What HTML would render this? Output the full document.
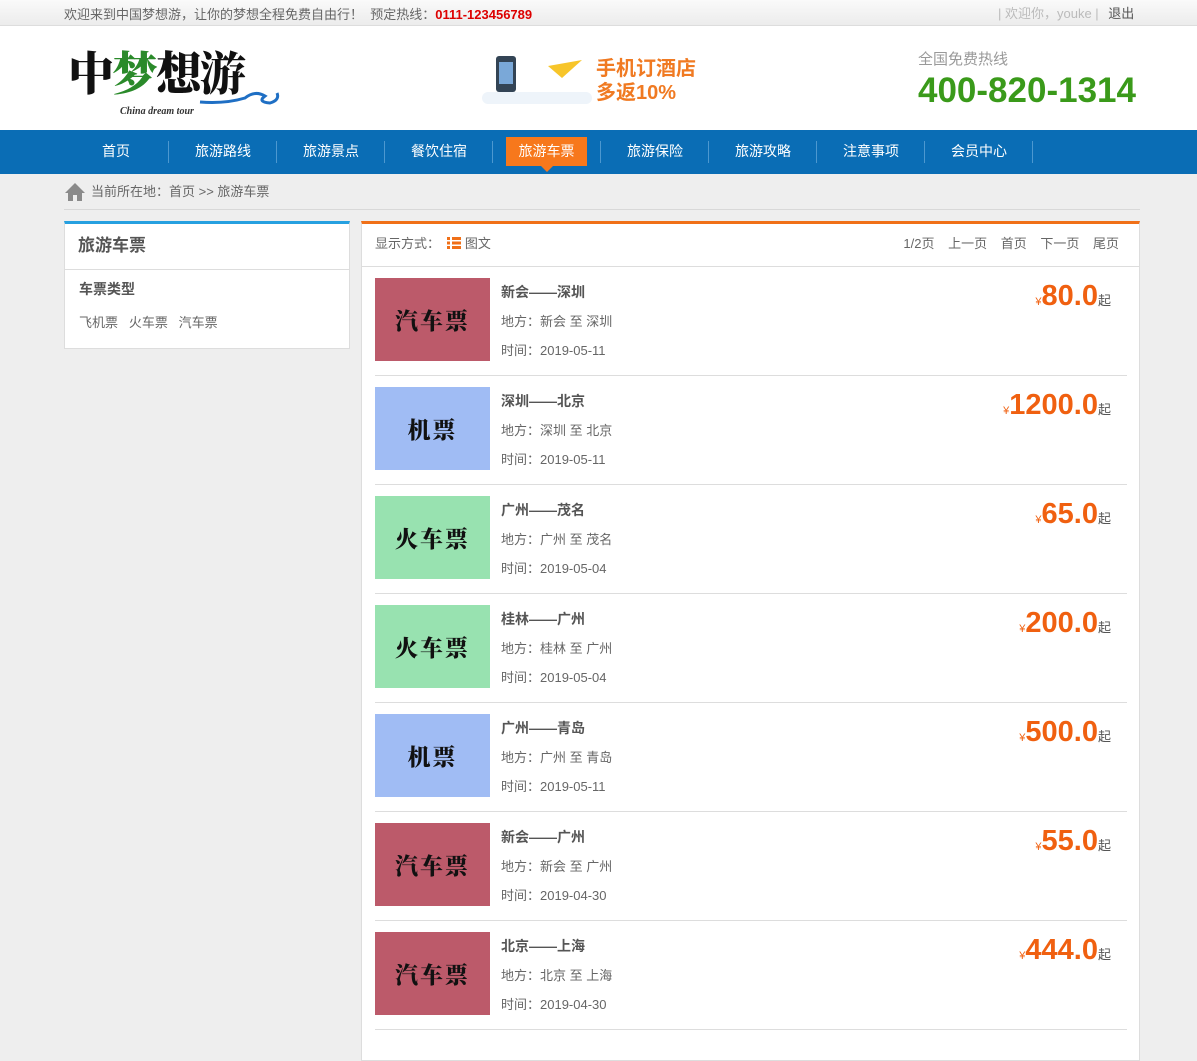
<!DOCTYPE html>
<html><head><meta charset="utf-8"><style>
*{margin:0;padding:0;box-sizing:border-box}
body{width:1197px;height:1051px;overflow:hidden;background:#eeeeee;font-family:"Liberation Sans","Noto Sans CJK SC",sans-serif;font-size:13px;color:#555}
.top{height:26px;background:linear-gradient(#fafafa,#ececec);border-bottom:1px solid #ddd;position:relative}
.top .l{position:absolute;left:64px;top:4px;font-size:13px;color:#666}
.top .l b{color:#d00;font-weight:bold}
.top .r{position:absolute;left:998px;top:3px;color:#bbb;font-size:13px}
.top .r span{color:#555;margin-left:6px}
.hd{height:104px;background:#fff;position:relative}
.nav{height:44px;background:#0a6db5;position:relative}
.nav a{position:absolute;top:0;width:108px;height:44px;line-height:42px;text-align:center;color:#fff;font-size:14px}
.nav i{position:absolute;top:11px;width:1px;height:22px;background:#4c98d0}
.nav .act{position:absolute;left:506px;top:7px;width:81px;height:29px;background:#f7781c;color:#fff;text-align:center;line-height:29px;font-size:14px}
.nav .act:after{content:"";position:absolute;left:35px;bottom:-6px;border:6px solid transparent;border-top-color:#f7781c;border-bottom:0}
.crumb{position:absolute;left:64px;top:176px;width:1076px;height:34px;border-bottom:1px solid #d8d8d8;line-height:32px;font-size:13px;color:#666;padding-left:27px}
.lbox{position:absolute;left:64px;top:221px;width:286px;height:128px;background:#fff;border:1px solid #ddd;border-top:3px solid #26a0e0}
.lbox h2{height:46px;line-height:44px;font-size:17px;color:#555;padding-left:13px;border-bottom:1px solid #ddd}
.lbox h3{font-size:14px;color:#555;padding:9px 0 0 14px;font-weight:bold}
.lbox p{padding:13px 0 0 14px;color:#666}
.rbox{position:absolute;left:361px;top:221px;width:779px;height:840px;background:#fff;border:1px solid #ddd;border-top:3px solid #f07018}
.rh{height:43px;border-bottom:1px solid #ddd;position:relative;line-height:40px;color:#666}
.rh .l{position:absolute;left:13px}
.rh .r{position:absolute;right:20px}
.rh .r span{margin-left:10px}
.row{position:absolute;left:13px;width:752px;height:109px;border-bottom:1px solid #ddd}
.img{position:absolute;left:0;top:11px;width:115px;height:83px;font-family:"Noto Serif CJK SC",serif;font-weight:900;font-size:23px;color:#111;text-align:center;line-height:83px;letter-spacing:2px}
.bus{background:#bc5a6a}.air{background:#a0bcf4}.train{background:#98e2b0}
.t{position:absolute;left:126px;top:15px;font-size:14px;font-weight:bold;color:#555}
.a{position:absolute;left:126px;top:44px;color:#666}
.d{position:absolute;left:126px;top:73px;color:#666}
.p{position:absolute;right:16px;top:13px;color:#f06010;font-weight:bold;font-size:29px;font-family:"Liberation Sans",sans-serif}
.p small{font-size:11px;font-weight:normal}
.p em{font-style:normal;font-size:13px;color:#555;font-weight:normal}
</style></head><body>
<div class="top"><div class="l">欢迎来到中国梦想游，让你的梦想全程免费自由行！&nbsp; 预定热线：<b>0111-123456789</b></div>
<div class="r">| 欢迎你，youke | <span>退出</span></div></div>
<div class="hd">
<div style="position:absolute;left:68px;top:12px;font-family:'Noto Serif CJK SC',serif;font-weight:900;font-size:46px;color:#111;letter-spacing:-2px">中<span style="color:#2a8a2a">梦</span>想游</div>
<div style="position:absolute;left:120px;top:80px;font-family:'Liberation Serif',serif;font-style:italic;font-weight:bold;font-size:10px;color:#333">China dream tour</div>
<svg style="position:absolute;left:195px;top:62px" width="90" height="20"><path d="M5 14 Q30 16 50 10 Q60 2 70 8 Q62 14 75 15 Q85 12 82 5" fill="none" stroke="#1f6fc4" stroke-width="3"/></svg>
<div style="position:absolute;left:496px;top:30px;width:20px;height:36px;background:#345;border-radius:3px"></div>
<div style="position:absolute;left:499px;top:36px;width:14px;height:22px;background:#7aa8d8"></div>
<div style="position:absolute;left:482px;top:66px;width:110px;height:12px;background:#eef4fa;border-radius:8px"></div>
<svg style="position:absolute;left:548px;top:32px" width="36" height="22"><path d="M0 8 L34 2 L14 20 Z" fill="#f7c52a"/></svg>
<div style="position:absolute;left:596px;top:31px;color:#f07a22;font-size:20px;font-weight:bold;line-height:24px">手机订酒店<br>多返10%</div>
<div style="position:absolute;left:918px;top:22px;color:#999;font-size:15px">全国免费热线</div>
<div style="position:absolute;left:918px;top:45px;color:#3a9a1a;font-size:35px;font-weight:bold">400-820-1314</div>
</div>
<div class="nav">
<a style="left:62px">首页</a><i style="left:168px"></i>
<a style="left:169px">旅游路线</a><i style="left:276px"></i>
<a style="left:277px">旅游景点</a><i style="left:384px"></i>
<a style="left:385px">餐饮住宿</a><i style="left:492px"></i>
<div class="act">旅游车票</div><i style="left:600px"></i>
<a style="left:601px">旅游保险</a><i style="left:708px"></i>
<a style="left:709px">旅游攻略</a><i style="left:816px"></i>
<a style="left:817px">注意事项</a><i style="left:924px"></i>
<a style="left:925px">会员中心</a><i style="left:1032px"></i>
</div>
<div class="crumb"><svg style="position:absolute;left:0;top:6px" width="22" height="20"><path d="M11 1 L1 11 L4 11 L4 19 L9 19 L9 13 L13 13 L13 19 L18 19 L18 11 L21 11 Z" fill="#8a8a8a"/></svg>当前所在地：首页 &gt;&gt; 旅游车票</div>
<div class="lbox"><h2>旅游车票</h2><h3>车票类型</h3><p>飞机票&nbsp;&nbsp; 火车票&nbsp;&nbsp; 汽车票</p></div>
<div class="rbox">
<div class="rh"><span class="l">显示方式：&nbsp; <svg width="14" height="12" style="vertical-align:-1px"><g fill="#f07018"><rect x="0" y="0" width="3" height="3"/><rect x="5" y="0" width="9" height="3"/><rect x="0" y="4.5" width="3" height="3"/><rect x="5" y="4.5" width="9" height="3"/><rect x="0" y="9" width="3" height="3"/><rect x="5" y="9" width="9" height="3"/></g></svg> 图文</span>
<span class="r">1/2页 <span>上一页</span> <span>首页</span> <span>下一页</span> <span>尾页</span></span></div>
<div class="row" style="top:43px"><div class="img bus">汽车票</div><div class="t">新会——深圳</div><div class="a">地方：新会 至 深圳</div><div class="d">时间：2019-05-11</div><div class="p"><small>¥</small>80.0<em>起</em></div></div>
<div class="row" style="top:152px"><div class="img air">机票</div><div class="t">深圳——北京</div><div class="a">地方：深圳 至 北京</div><div class="d">时间：2019-05-11</div><div class="p"><small>¥</small>1200.0<em>起</em></div></div>
<div class="row" style="top:261px"><div class="img train">火车票</div><div class="t">广州——茂名</div><div class="a">地方：广州 至 茂名</div><div class="d">时间：2019-05-04</div><div class="p"><small>¥</small>65.0<em>起</em></div></div>
<div class="row" style="top:370px"><div class="img train">火车票</div><div class="t">桂林——广州</div><div class="a">地方：桂林 至 广州</div><div class="d">时间：2019-05-04</div><div class="p"><small>¥</small>200.0<em>起</em></div></div>
<div class="row" style="top:479px"><div class="img air">机票</div><div class="t">广州——青岛</div><div class="a">地方：广州 至 青岛</div><div class="d">时间：2019-05-11</div><div class="p"><small>¥</small>500.0<em>起</em></div></div>
<div class="row" style="top:588px"><div class="img bus">汽车票</div><div class="t">新会——广州</div><div class="a">地方：新会 至 广州</div><div class="d">时间：2019-04-30</div><div class="p"><small>¥</small>55.0<em>起</em></div></div>
<div class="row" style="top:697px"><div class="img bus">汽车票</div><div class="t">北京——上海</div><div class="a">地方：北京 至 上海</div><div class="d">时间：2019-04-30</div><div class="p"><small>¥</small>444.0<em>起</em></div></div>
</div>
</body></html>
